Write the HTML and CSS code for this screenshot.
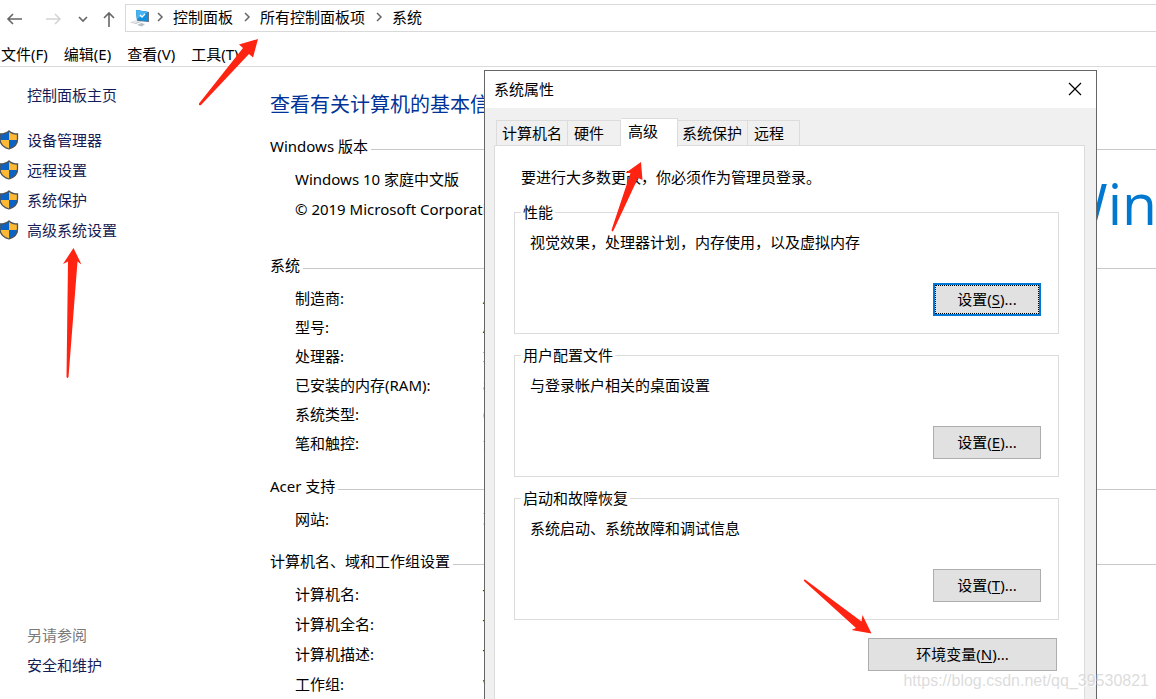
FILE: index.html
```html
<!DOCTYPE html>
<html lang="zh-CN">
<head>
<meta charset="utf-8">
<title>系统</title>
<link rel="stylesheet" href="styles.css">
</head>
<body>
<svg class="defs" aria-hidden="true">
  <symbol id="shield" viewBox="0 0 19 20">
    <clipPath id="shield-clip"><path d="M9 1C7 3 4 4 0 4V9C0 14 4 17.500 9 19C14 17.500 18 14 18 9V4C14 4 11 3 9 1Z"/></clipPath>
    <g clip-path="url(#shield-clip)">
      <path fill="#0a63c4" d="M0 0H9V10H0ZM9 10H19V20H9Z"/>
      <path fill="#fdb934" d="M9 0H19V10H9ZM0 10H9V20H0Z"/>
    </g>
    <path fill="none" stroke="#4f5357" stroke-width="1.300" d="M9 1C7 3 4 4 0 4V9C0 14 4 17.500 9 19C14 17.500 17.500 14 17.500 9V4C14 4 11 3 9 1Z"/>
  </symbol>
  <symbol id="chevron" viewBox="0 0 8 10"><path fill="none" stroke="#666" stroke-width="1.500" d="M2 1L6 5L2 9"/></symbol>
</svg>
<div class="window">
  <header class="toolbar">
    <nav class="history" aria-label="导航">
      <button class="nav-btn" aria-label="后退"><svg width="18" height="14" viewBox="0 0 18 14"><path fill="none" stroke="#666" stroke-width="1.600" d="M16 7H2M7 2L2 7L7 12"/></svg></button>
      <button class="nav-btn nav-forward" aria-label="前进"><svg width="18" height="14" viewBox="0 0 18 14"><path fill="none" stroke="#d4d4d4" stroke-width="1.600" d="M1 7H15M10 2L15 7L10 12"/></svg></button>
      <button class="nav-btn nav-recent" aria-label="最近"><svg width="10" height="8" viewBox="0 0 10 8"><path fill="none" stroke="#666" stroke-width="1.600" d="M1 2L5 6L9 2"/></svg></button>
      <button class="nav-btn nav-up" aria-label="上移"><svg width="14" height="16" viewBox="0 0 14 16"><path fill="none" stroke="#666" stroke-width="1.600" d="M7 16V2M2 7L7 2L12 7"/></svg></button>
    </nav>
    <nav class="address" aria-label="地址">
      <svg class="pc" width="20" height="18" viewBox="0 0 20 18">
        <path fill="#68737e" d="M6 1L19 3V13L7 12Z"/><path fill="#0f8fe0" d="M6 1L18 3V12.500L7 11Z"/><path fill="#45b4f3" d="M6 1L18 3L7 10Z"/>
        <path fill="none" stroke="#fff" stroke-width="1.400" d="M10 6L12 8L15 5"/>
        <path fill="#c3c8cd" d="M0 13.500L6 11.500L12 12.500L6 15Z"/><path fill="#e4e7ea" d="M1 13L6 11.500L10 12.500L5 14.200Z"/><path fill="#b8bec4" d="M7 16L11 14L15 15L12 17.500Z"/>
      </svg>
      <svg class="chev"><use href="#chevron"/></svg><a href="#">控制面板</a>
      <svg class="chev"><use href="#chevron"/></svg><a href="#">所有控制面板项</a>
      <svg class="chev"><use href="#chevron"/></svg><a href="#">系统</a>
    </nav>
  </header>
  <nav class="menu" aria-label="菜单">
    <button>文件(F)</button><button>编辑(E)</button><button>查看(V)</button><button>工具(T)</button>
  </nav>
  <div class="main">
    <aside class="sidebar">
      <a class="home" href="#">控制面板主页</a>
      <a href="#"><svg class="shield"><use href="#shield"/></svg>设备管理器</a>
      <a href="#"><svg class="shield"><use href="#shield"/></svg>远程设置</a>
      <a href="#"><svg class="shield"><use href="#shield"/></svg>系统保护</a>
      <a href="#"><svg class="shield"><use href="#shield"/></svg>高级系统设置</a>
      <div class="see-also">
        <p>另请参阅</p>
        <a href="#">安全和维护</a>
      </div>
    </aside>
    <main class="content">
      <h1>查看有关计算机的基本信息</h1>
      <section class="edition">
        <h2>Windows 版本</h2>
        <div class="edition-body">
          <div><p>Windows 10 家庭中文版</p><p>© 2019 Microsoft Corporation</p></div>
          <div class="brand">Windows 10</div>
        </div>
      </section>
      <section class="system">
        <h2>系统</h2>
        <dl>
          <dt>制造商:</dt><dd>A</dd>
          <dt>型号:</dt><dd>A</dd>
          <dt>处理器:</dt><dd>I</dd>
          <dt>已安装的内存(RAM):</dt><dd>8</dd>
          <dt>系统类型:</dt><dd>6</dd>
          <dt>笔和触控:</dt><dd>没</dd>
        </dl>
      </section>
      <section>
        <h2>Acer 支持</h2>
        <dl><dt>网站:</dt><dd><a href="#">联</a></dd></dl>
      </section>
      <section>
        <h2>计算机名、域和工作组设置</h2>
        <dl>
          <dt>计算机名:</dt><dd>T</dd>
          <dt>计算机全名:</dt><dd>T</dd>
          <dt>计算机描述:</dt><dd>T</dd>
          <dt>工作组:</dt><dd>W</dd>
        </dl>
      </section>
    </main>
  </div>

  <div class="dialog" role="dialog" aria-labelledby="dialog-title">
    <div class="titlebar">
      <span id="dialog-title">系统属性</span>
      <button class="close" aria-label="关闭"><svg width="14" height="14" viewBox="0 0 14 14"><path fill="none" stroke="#000" stroke-width="1.200" d="M1 1L13 13M13 1L1 13"/></svg></button>
    </div>
    <div class="tabs" role="tablist">
      <button role="tab">计算机名</button><button role="tab">硬件</button><button role="tab" aria-selected="true" class="selected">高级</button><button role="tab">系统保护</button><button role="tab">远程</button>
    </div>
    <div class="panel" role="tabpanel">
      <p class="note">要进行大多数更改，你必须作为管理员登录。</p>
      <fieldset><legend>性能</legend><p>视觉效果，处理器计划，内存使用，以及虚拟内存</p><button class="btn default">设置(<u>S</u>)...</button></fieldset>
      <fieldset><legend>用户配置文件</legend><p>与登录帐户相关的桌面设置</p><button class="btn">设置(<u>E</u>)...</button></fieldset>
      <fieldset><legend>启动和故障恢复</legend><p>系统启动、系统故障和调试信息</p><button class="btn">设置(<u>T</u>)...</button></fieldset>
      <button class="btn wide">环境变量(<u>N</u>)...</button>
    </div>
  </div>

  <svg class="arrows" width="1156" height="699" viewBox="0 0 1156 699" fill="#ff2312" aria-hidden="true">
    <path d="M258 39L239 44.500L243 48L199 103.500Q198.500 106 201 105L249 54L253 57.500Z"/>
    <path d="M73.500 248L63 264L68 261.500L66.500 377Q67.500 379 68.500 377L77.500 261.500L81.500 264.500Z"/>
    <path d="M641 162L625.500 173L630.500 173L611.500 230Q612 232.500 613.500 230.500L638 178L642.500 180Z"/>
    <path d="M871.500 633.500L862.500 615L861.500 621.500L805 579.500Q803 579.500 804.500 581.500L856 628L851.500 630Z"/>
  </svg>
  <div class="watermark">https://blog.csdn.net/qq_39530821</div>
</div>
</body>
</html>
```
FILE: styles.css
```css
* { box-sizing: border-box; }
body, h1, h2, p, dl, dd { margin: 0; }
body, button {
  font-family: "Noto Sans", "Noto Sans CJK SC", sans-serif;
  font-size: 15px;
  color: #000;
}
body { background: #fff; }
a { color: inherit; text-decoration: none; }
button { padding: 0; border: 0; background: none; }
.defs { position: absolute; width: 0; height: 0; }

.window {
  position: relative;
  display: flex;
  flex-direction: column;
  height: 100vh;
  overflow: hidden;
}

/* Toolbar */
.toolbar { display: flex; flex: none; height: 32px; padding-top: 4px; }
.history { display: flex; align-items: center; width: 125px; padding: 2px 0 0 6px; }
.nav-btn { display: flex; }
.nav-forward { margin-left: 21px; }
.nav-recent { margin-left: 15px; }
.nav-up { margin-left: 14px; }
.address {
  display: flex;
  flex: 1;
  align-items: center;
  gap: 9px;
  padding-left: 4px;
  line-height: 22px;
  border: 1px solid #d9d9d9;
  border-right: 0;
}
.address a { padding-bottom: 2px; }
.address a + .chev { margin-left: 1px; }
.pc { margin-right: -3px; }
.chev { width: 8px; height: 10px; margin-bottom: 2px; }

.menu {
  display: flex;
  flex: none;
  gap: 16px;
  height: 35px;
  padding: 10px 0 0 1px;
  border-bottom: 1px solid #dadada;
}
.menu button { height: 24px; line-height: 24px; }

.main { display: flex; flex: 1; min-height: 0; }

/* Sidebar */
.sidebar {
  display: flex;
  flex: none;
  flex-direction: column;
  width: 270px;
  padding: 13px 0 19px;
  line-height: 30px;
  color: #151c55;
}
.sidebar a { display: flex; align-items: center; padding-left: 27px; }
.sidebar a:has(.shield) { gap: 8px; padding-left: 0; }
.sidebar .home { margin-bottom: 15px; }
.shield { width: 19px; height: 20px; }
.see-also { margin-top: auto; }
.see-also p { padding-left: 27px; color: #7a7a7a; }

/* System information */
.content { flex: 1; min-width: 0; padding-top: 23px; line-height: 30px; }
h1 { margin-bottom: 11px; font-size: 20px; font-weight: 400; color: #003399; white-space: nowrap; }
h2 { display: flex; align-items: center; gap: 3px; margin-bottom: 3px; font-size: 15px; font-weight: 400; }
h2::after { content: ""; flex: 1; height: 1px; margin-top: 6px; background: #c8c8c8; }
section { margin-bottom: 12px; }
.edition { margin-bottom: 26px; }
.edition-body { display: flex; justify-content: space-between; height: 60px; padding-left: 25px; white-space: nowrap; }
.brand { width: 101px; font-family: "Open Sans", sans-serif; font-size: 57px; line-height: 78px; color: #0078cf; }
dl { display: grid; grid-template-columns: 188px 1fr; padding-left: 25px; }
.system { margin-bottom: 13px; }
.system dl { padding-top: 1px; line-height: 29px; }
dd a { color: #0033cc; }

/* Dialog */
.dialog {
  position: absolute;
  top: 70px;
  bottom: 0;
  left: 484px;
  width: 613px;
  overflow: hidden;
  border: 1px solid #666;
  border-bottom: 0;
  background: #f0f0f0;
}
.titlebar {
  display: flex;
  align-items: center;
  justify-content: space-between;
  height: 37px;
  padding: 0 14px 2px 9px;
  background: #fff;
}
.close { display: flex; }
.tabs { display: flex; align-items: flex-end; height: 38px; padding-left: 11px; }
.tabs button {
  height: 26px;
  padding: 0 5px;
  line-height: 25px;
  border: 1px solid #dcdcdc;
  border-width: 1px 1px 0 0;
}
.tabs button:first-child { border-left-width: 1px; }
.tabs button:nth-child(2) { padding: 0 16px 0 6px; }
.tabs button:nth-child(4) { padding: 0 5px 0 4px; }
.tabs button:last-child { padding: 0 15px 0 6px; }
.tabs .selected {
  z-index: 1;
  height: 29px;
  margin-bottom: -1px;
  padding: 0 19px 4px 7px;
  line-height: 24px;
  background: #fff;
}
.panel {
  min-height: 100%;
  margin: -1px 11px 0 9px;
  padding: 21px 25px 0 19px;
  border: 1px solid #dcdcdc;
  background: #fff;
}
.note { padding-left: 7px; line-height: 20px; margin-bottom: 16px; }
fieldset {
  display: flow-root;
  min-width: 0;
  margin: 0 0 12px;
  padding: 10px 17px 17px 15px;
  border: 1px solid #dcdcdc;
}
legend { margin-left: -9px; padding: 0 2px; line-height: 18px; }
fieldset p { line-height: 22px; }
.btn {
  display: block;
  width: 108px;
  height: 33px;
  margin: 30px 0 0 auto;
  padding-bottom: 2px;
  border: 1px solid #adadad;
  background: #e1e1e1;
}
.btn u { text-underline-offset: 2px; }
.default { border: 2px solid #0078d7; outline: 1px dotted #000; outline-offset: -3px; }
.wide { width: 189px; margin: 18px 2px 0 auto; }

/* Overlays */
.arrows { position: absolute; top: 0; left: 0; pointer-events: none; }
.watermark {
  position: absolute;
  right: 7px;
  bottom: 8px;
  font: 16px/20px "Liberation Sans", sans-serif;
  color: rgba(205, 205, 205, 0.7);
  text-shadow: 1px 1px 0 rgba(255, 255, 255, 0.8);
}
```
